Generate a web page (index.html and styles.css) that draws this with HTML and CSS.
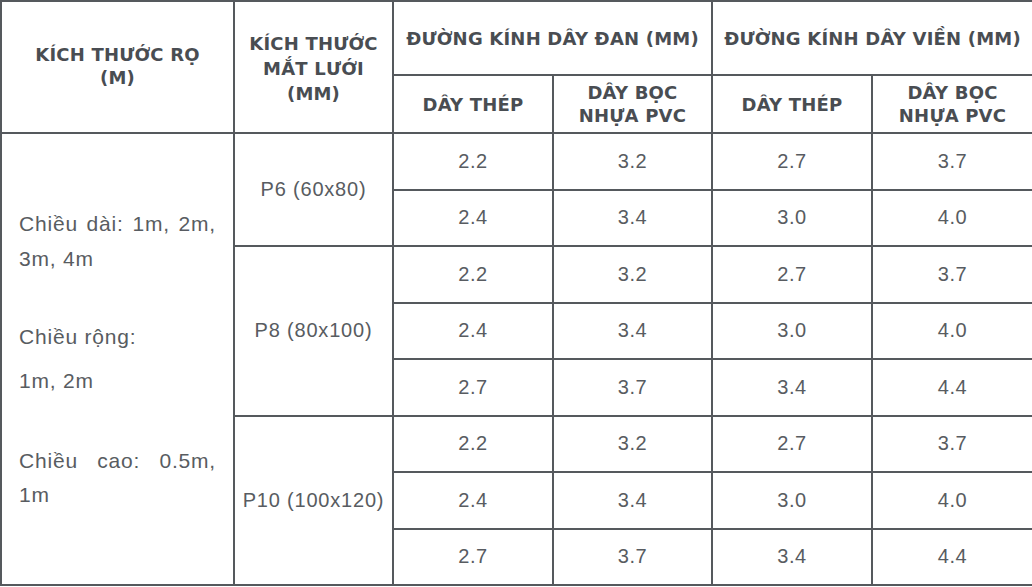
FILE: index.html
```html
<!DOCTYPE html>
<html lang="vi">
<head>
<meta charset="utf-8">
<link rel="stylesheet" href="styles.css">
</head>
<body>
<table class="spec">
  <colgroup>
    <col class="c1"><col class="c2"><col class="c3"><col class="c4"><col class="c5"><col class="c6">
  </colgroup>
  <thead>
    <tr class="h1">
      <th rowspan="2" class="top">KÍCH THƯỚC RỌ<br>(M)</th>
      <th rowspan="2" class="top2">KÍCH THƯỚC<br>MẮT LƯỚI<br>(MM)</th>
      <th colspan="2">ĐƯỜNG KÍNH DÂY ĐAN (MM)</th>
      <th colspan="2">ĐƯỜNG KÍNH DÂY VIỀN (MM)</th>
    </tr>
    <tr class="h2">
      <th>DÂY THÉP</th>
      <th>DÂY BỌC<br>NHỰA PVC</th>
      <th>DÂY THÉP</th>
      <th>DÂY BỌC<br>NHỰA PVC</th>
    </tr>
  </thead>
  <tbody>
    <tr>
      <td rowspan="8" class="desc">
        <p class="p1"><span class="jl">Chiều dài: 1m, 2m,</span>3m, 4m</p>
        <p class="p2">Chiều rộng:<br>1m, 2m</p>
        <p class="p3"><span class="jl">Chiều cao: 0.5m,</span>1m</p>
      </td>
      <td rowspan="2" class="size">P6 (60x80)</td>
      <td>2.2</td><td>3.2</td><td>2.7</td><td>3.7</td>
    </tr>
    <tr><td>2.4</td><td>3.4</td><td>3.0</td><td>4.0</td></tr>
    <tr>
      <td rowspan="3" class="size">P8 (80x100)</td>
      <td>2.2</td><td>3.2</td><td>2.7</td><td>3.7</td>
    </tr>
    <tr><td>2.4</td><td>3.4</td><td>3.0</td><td>4.0</td></tr>
    <tr><td>2.7</td><td>3.7</td><td>3.4</td><td>4.4</td></tr>
    <tr>
      <td rowspan="3" class="size">P10 (100x120)</td>
      <td>2.2</td><td>3.2</td><td>2.7</td><td>3.7</td>
    </tr>
    <tr><td>2.4</td><td>3.4</td><td>3.0</td><td>4.0</td></tr>
    <tr><td>2.7</td><td>3.7</td><td>3.4</td><td>4.4</td></tr>
  </tbody>
</table>
</body>
</html>
```
FILE: styles.css
```css
html, body {
  margin: 0;
  padding: 0;
  background: #ffffff;
}
.spec {
  border-collapse: collapse;
  table-layout: fixed;
  width: 1032px;
  color: #53575c;
  font-family: "Liberation Sans", Arial, sans-serif;
}
.c1 { width: 233px; }
.c2 { width: 159px; }
.c3 { width: 160px; }
.c4 { width: 159px; }
.c5 { width: 160px; }
.c6 { width: 161px; }
.spec th, .spec td {
  border: 2px solid #55595d;
  padding: 0;
  text-align: center;
  vertical-align: middle;
}
.spec th {
  font-family: "DejaVu Sans", sans-serif;
  font-weight: bold;
  font-size: 18px;
  letter-spacing: 0.2px;
  line-height: 23px;
  color: #494d52;
}
.h1 { height: 74px; }
.h2 { height: 58px; }
.spec th.top { vertical-align: top; padding-top: 41px; }
.spec th.top2 { vertical-align: top; padding-top: 29px; line-height: 25px; }
.spec td {
  font-size: 20px;
  letter-spacing: 0.5px;
  height: 54.5px;
  color: #585c61;
}
.spec td.size {
  letter-spacing: 0.8px;
}
.spec td.desc {
  text-align: left;
  padding: 0 17px 0 17px;
  font-size: 21px;
  letter-spacing: 0.8px;
}
.desc p {
  margin: 0;
  text-align: justify;
}
.desc .p1 { line-height: 35px; }
.desc .p2 { line-height: 44px; margin-top: 39px; }
.desc .p3 { line-height: 34px; margin-top: 41px; }
.jl {
  display: block;
  text-align: justify;
  text-align-last: justify;
}
```
